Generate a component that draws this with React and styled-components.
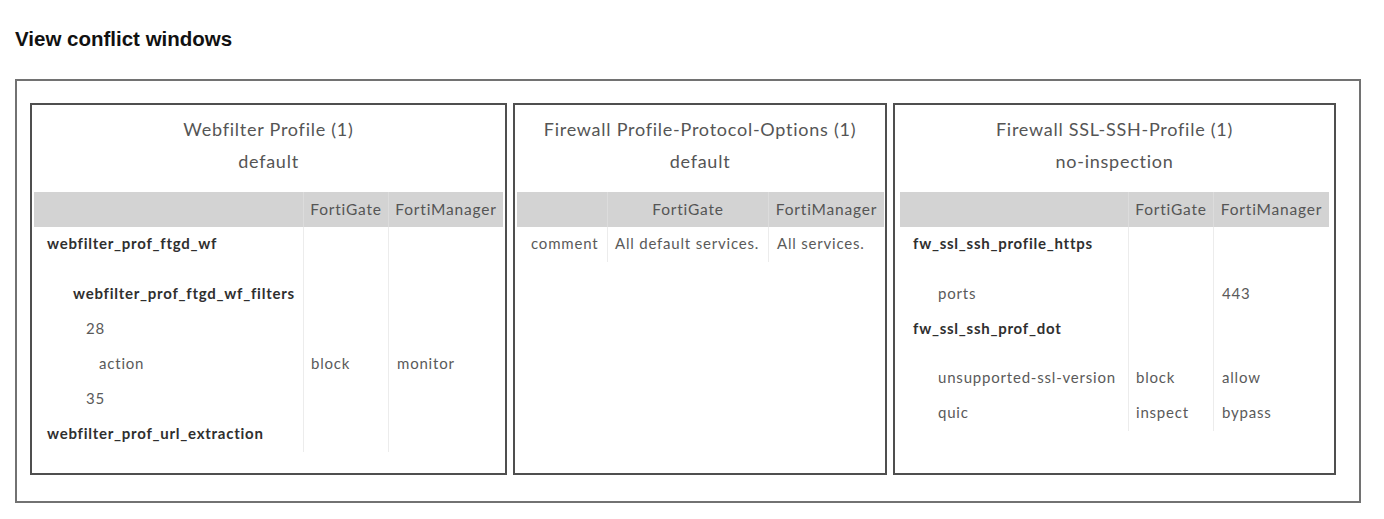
import React from 'react';
import styled, { createGlobalStyle } from 'styled-components';

const GlobalStyle = createGlobalStyle`
  body {
    margin: 0;
    background: #ffffff;
    font-family: Lato, "Open Sans", sans-serif;
  }
`;

const Page = styled.div`
  padding: 26px 23px 0 15px;
`;

const Heading = styled.h1`
  margin: 0 0 28px;
  font-family: "Liberation Sans", Arial, sans-serif;
  font-size: 20.5px;
  font-weight: 700;
  line-height: 25px;
  color: #111;
`;

const Frame = styled.div`
  display: flex;
  gap: 6px;
  padding: 22px 24px 26px 13px;
  border: 2px solid #727272;
`;

const Panel = styled.section`
  width: ${({ $width }) => $width}px;
  height: 372px;
  box-sizing: border-box;
  border: 2px solid #4f4f4f;
  padding: 0 ${({ $inset }) => $inset}px;
  flex: none;
`;

const PanelTitle = styled.div`
  padding-top: 8px;
  margin-bottom: 15px;
  text-align: center;
  font-size: 18px;
  letter-spacing: 0.75px;
  line-height: 32px;
  color: #555;
`;

const Table = styled.div`
  display: grid;
  grid-template-columns: ${({ $cols }) => $cols.map((c) => `${c}px`).join(' ')};
  font-size: 15px;
  color: #555;
`;

const HeadCell = styled.div`
  height: 35px;
  line-height: 35px;
  background: #d3d3d3;
  text-align: center;
  color: #555;
  font-size: 15.5px;
  letter-spacing: 0.8px;
  white-space: nowrap;
  border-left: ${({ $first }) => ($first ? 'none' : '1px solid #dcdcdc')};
`;

const Cell = styled.div`
  height: 35px;
  padding: 0 0 ${({ $extra }) => $extra}px ${({ $indent }) => $indent}px;
  line-height: 33px;
  white-space: nowrap;
  font-weight: ${({ $bold }) => ($bold ? 700 : 400)};
  letter-spacing: ${({ $bold }) => ($bold ? '0.75px' : '0.8px')};
  color: ${({ $bold }) => ($bold ? '#2f2f2f' : '#5a5a5a')};
  border-left: ${({ $first }) => ($first ? 'none' : '1px solid #ececec')};
`;

const panels = [
  {
    title: 'Webfilter Profile (1)',
    name: 'default',
    width: 477,
    inset: 2,
    cols: [269, 85, 115],
    rows: [
      { label: 'webfilter_prof_ftgd_wf', bold: true, indent: 13, extra: 15 },
      { label: 'webfilter_prof_ftgd_wf_filters', bold: true, indent: 39 },
      { label: '28', indent: 52 },
      { label: 'action', indent: 65, fg: 'block', fm: 'monitor' },
      { label: '35', indent: 52 },
      { label: 'webfilter_prof_url_extraction', bold: true, indent: 13 },
    ],
  },
  {
    title: 'Firewall Profile-Protocol-Options (1)',
    name: 'default',
    width: 374,
    inset: 2,
    cols: [90, 161, 116],
    rows: [
      { label: 'comment', indent: 14, fg: 'All default services.', fm: 'All services.' },
    ],
  },
  {
    title: 'Firewall SSL-SSH-Profile (1)',
    name: 'no-inspection',
    width: 443,
    inset: 5,
    cols: [228, 85, 116],
    rows: [
      { label: 'fw_ssl_ssh_profile_https', bold: true, indent: 13, extra: 15 },
      { label: 'ports', indent: 38, fm: '443' },
      { label: 'fw_ssl_ssh_prof_dot', bold: true, indent: 13, extra: 14 },
      { label: 'unsupported-ssl-version', indent: 38, fg: 'block', fm: 'allow' },
      { label: 'quic', indent: 38, fg: 'inspect', fm: 'bypass' },
    ],
  },
];

const ConflictPanel = ({ panel }) => (
  <Panel $width={panel.width} $inset={panel.inset}>
    <PanelTitle>
      <div>{panel.title}</div>
      <div>{panel.name}</div>
    </PanelTitle>
    <Table $cols={panel.cols}>
      <HeadCell $first />
      <HeadCell>FortiGate</HeadCell>
      <HeadCell>FortiManager</HeadCell>
      {panel.rows.map((row, i) => (
        <React.Fragment key={i}>
          <Cell $first $bold={row.bold} $indent={row.indent} $extra={row.extra || 0}>
            {row.label}
          </Cell>
          <Cell $indent={7} $extra={row.extra || 0}>{row.fg}</Cell>
          <Cell $indent={8} $extra={row.extra || 0}>{row.fm}</Cell>
        </React.Fragment>
      ))}
    </Table>
  </Panel>
);

export default function App() {
  return (
    <>
      <GlobalStyle />
      <Page>
        <Heading>View conflict windows</Heading>
        <Frame>
          {panels.map((p) => (
            <ConflictPanel key={p.title} panel={p} />
          ))}
        </Frame>
      </Page>
    </>
  );
}
